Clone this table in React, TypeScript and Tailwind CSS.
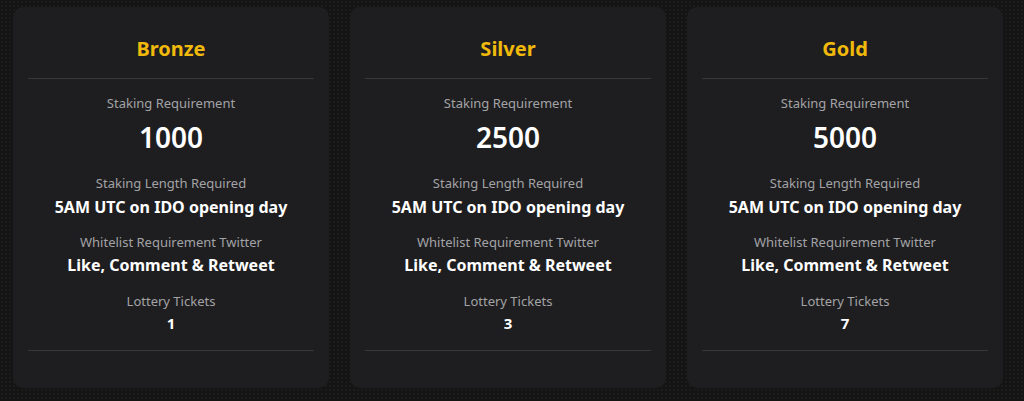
const tiers = [
    { name: 'Bronze', stake: '1000', tickets: '1' },
    { name: 'Silver', stake: '2500', tickets: '3' },
    { name: 'Gold', stake: '5000', tickets: '7' },
];

function TierCard({ name, stake, tickets }: { name: string; stake: string; tickets: string }) {
    return (
        <div className="w-[316px] bg-[#1e1e20] rounded-[10px] pt-[30px] pb-[37px] px-[15px] text-center">
            <h2 className="text-[20px] leading-[24px] font-bold text-[#f0b90b]">{name}</h2>
            <div className="h-px bg-[#38383a] mt-[17px]"></div>

            <p className="mt-[15px] text-[13px] leading-[18px] text-[#a3a3a6]">Staking Requirement</p>
            <p className="mt-[8px] text-[28px] leading-[34px] font-semibold text-white">{stake}</p>

            <p className="mt-[20px] text-[13px] leading-[18px] text-[#a3a3a6]">Staking Length Required</p>
            <p className="mt-[4px] text-[16px] leading-[22px] font-bold text-white">5AM UTC on IDO opening day</p>

            <p className="mt-[15px] text-[13px] leading-[18px] text-[#a3a3a6]">Whitelist Requirement Twitter</p>
            <p className="mt-[3px] text-[16px] leading-[22px] font-bold text-white">Like, Comment &amp; Retweet</p>

            <p className="mt-[16px] text-[13px] leading-[18px] text-[#a3a3a6]">Lottery Tickets</p>
            <p className="mt-[3px] text-[15px] leading-[20px] font-bold text-white">{tickets}</p>

            <div className="h-px bg-[#38383a] mt-[17px]"></div>
        </div>
    );
}

export default function App() {
    return (
        <div
            className="w-[1024px] h-[401px] overflow-hidden bg-[#141414] bg-[radial-gradient(#1c1c1c_1px,transparent_1px)] bg-[size:4px_4px] pt-[7px] pl-[13px]"
            style={{ fontFamily: '"Noto Sans", "Open Sans", sans-serif' }}
        >
            <div className="flex gap-[21px]">
                {tiers.map((t) => (
                    <TierCard key={t.name} {...t} />
                ))}
            </div>
        </div>
    );
}
